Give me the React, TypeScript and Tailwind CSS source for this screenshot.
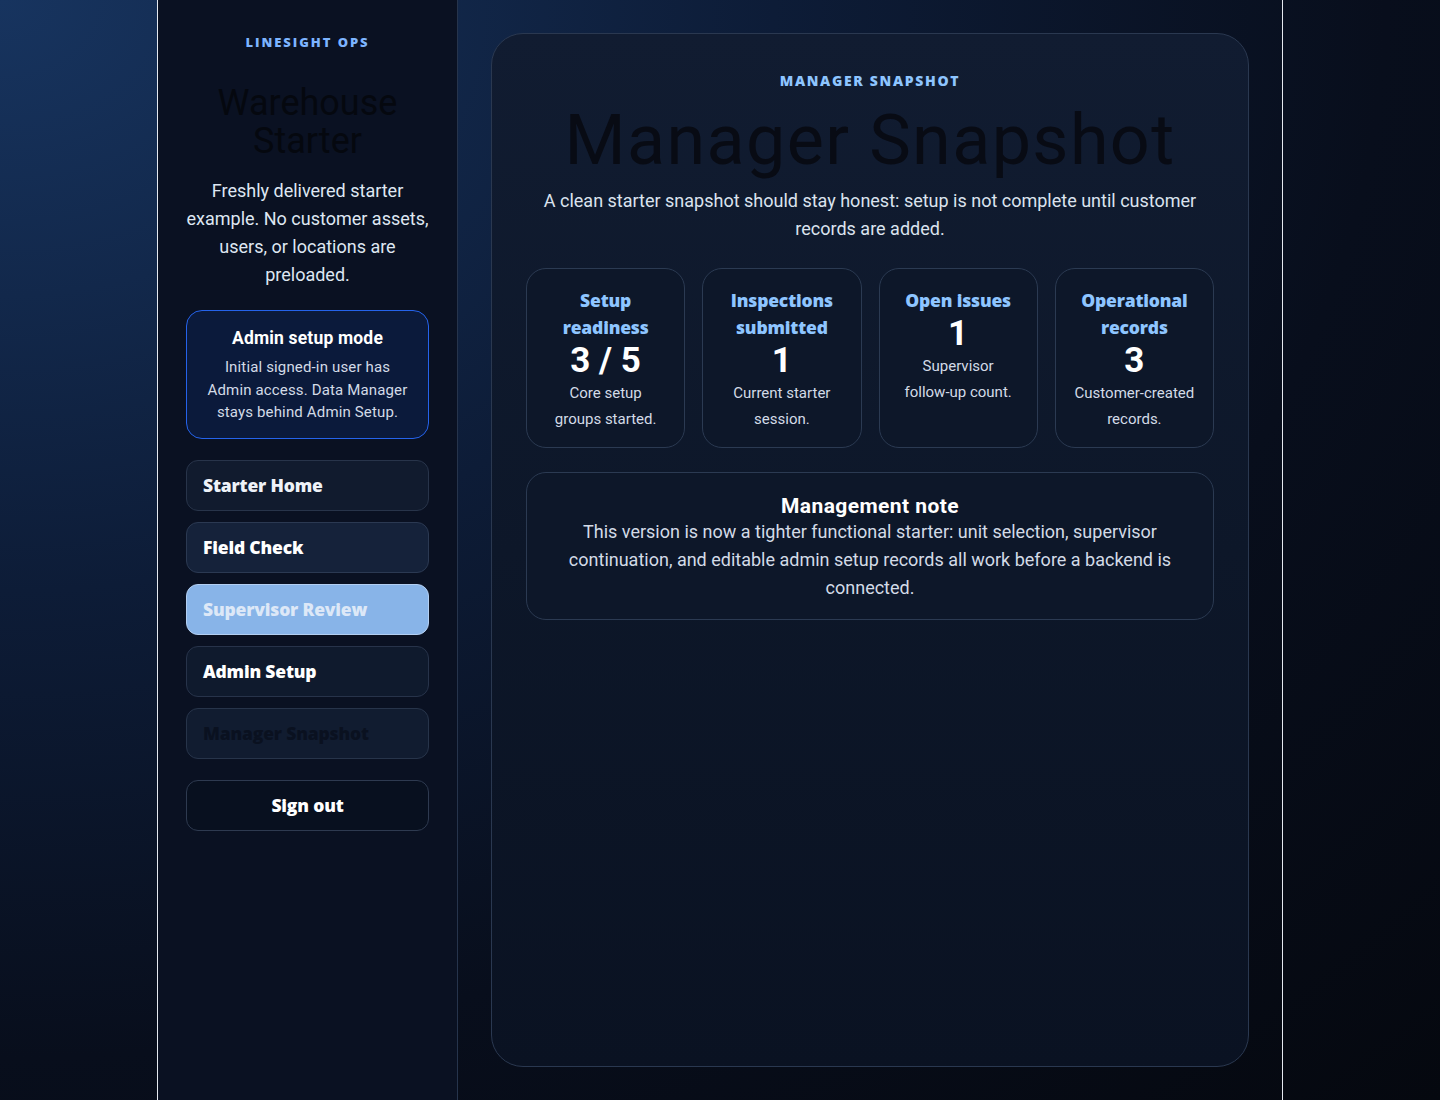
import React from "react";

const heavy = { fontFamily: "'Open Sans', 'Noto Sans', sans-serif" };

const navItems = [
  { label: "Starter Home", cls: "bg-[#111b2e] border-[#28344a] text-[#eef2f8]" },
  { label: "Field Check", cls: "bg-[#15223a] border-[#2b3952] text-white" },
  { label: "Supervisor Review", cls: "bg-[#88b4e8] border-[#b3cff2] text-[#dde8f7]" },
  { label: "Admin Setup", cls: "bg-[#0f1a2d] border-[#27334a] text-white" },
  { label: "Manager Snapshot", cls: "bg-[#111c30] border-[#27344a] text-[#0a1120]" },
];

const stats = [
  { title: ["Setup", "readiness"], value: "3 / 5", desc: ["Core setup", "groups started."] },
  { title: ["Inspections", "submitted"], value: "1", desc: ["Current starter", "session."] },
  { title: ["Open issues"], value: "1", desc: ["Supervisor", "follow-up count."] },
  { title: ["Operational", "records"], value: "3", desc: ["Customer-created", "records."] },
];

function Lines({ lines }: { lines: string[] }) {
  return (
    <>
      {lines.map((l, i) => (
        <span key={i} className="block">
          {l}
        </span>
      ))}
    </>
  );
}

/** Manager snapshot screen */
export default function App() {
  return (
    <div
      className="min-h-screen w-full bg-[radial-gradient(ellipse_at_top_left,#17345f_0%,#0d1c37_38%,#080e1c_68%,#05080f_100%)] text-[#0a0f1a]"
      style={{ fontFamily: "Roboto, 'Noto Sans', sans-serif" }}
    >
      <div className="mx-auto flex min-h-screen w-[1126px] border-x border-[#e5e9f0]">
        {/* sidebar */}
        <aside className="w-[300px] shrink-0 border-r border-[#26344c] bg-[#0a1122] px-[28px] pt-[33px] text-center">
          <p style={heavy} className="text-[13px] font-extrabold leading-[18px] tracking-[0.15em] text-[#7db4ff]">
            LINESIGHT OPS
          </p>
          <h2 className="mt-[33px] text-[36px] leading-[38px] text-[#05080f]">
            Warehouse
            <br />
            Starter
          </h2>
          <p className="mt-[17px] text-[18px] leading-[28px] text-[#dfe7f2]">
            Freshly delivered starter example. No customer assets, users, or locations are preloaded.
          </p>

          <div className="mt-[21px] rounded-[16px] border-[1.5px] border-[#2563eb] bg-[#0b1a3b] px-[12px] pb-[14px] pt-[15px]">
            <p className="text-[17.5px] font-bold leading-[24px] tracking-[0.01em] text-white">Admin setup mode</p>
            <p className="mt-[6px] text-[15px] leading-[22.5px] tracking-[0.01em] text-[#d3dbe7]">
              <Lines lines={["Initial signed-in user has", "Admin access. Data Manager", "stays behind Admin Setup."]} />
            </p>
          </div>

          <nav className="mt-[21px] flex flex-col gap-[11px]">
            {navItems.map((item) => (
              <button
                key={item.label}
                style={heavy}
                className={`h-[51px] rounded-[12px] border px-[16px] text-left text-[17.5px] font-extrabold tracking-[-0.01em] ${item.cls}`}
              >
                {item.label}
              </button>
            ))}
          </nav>

          <button
            style={heavy}
            className="mt-[21px] h-[51px] w-full rounded-[12px] border border-[#2e3a50] bg-[#08101f] text-[17.5px] font-extrabold tracking-[-0.01em] text-white"
          >
            Sign out
          </button>
        </aside>

        {/* main */}
        <main className="flex flex-1 flex-col p-[33px]">
          <section className="flex-1 rounded-[32px] border border-[#2a3850] bg-[linear-gradient(180deg,#111c31_0%,#0d1729_50%,#0a1222_100%)] px-[34px] pt-[34px] text-center">
            <p style={heavy} className="text-[14px] font-extrabold leading-[26px] tracking-[0.12em] text-[#8ec5ff]">
              MANAGER SNAPSHOT
            </p>
            <h1 className="mt-[11px] text-[70px] leading-[70px] tracking-[0.02em] text-[#080b14]">Manager Snapshot</h1>
            <p className="mt-[12px] text-[18px] leading-[28px] text-[#dbe3ee]">
              <Lines
                lines={[
                  "A clean starter snapshot should stay honest: setup is not complete until customer",
                  "records are added.",
                ]}
              />
            </p>

            <div className="mt-[25px] grid grid-cols-4 gap-[17px]">
              {stats.map((s) => (
                <div
                  key={s.value + s.title[0]}
                  className="rounded-[20px] border border-[#2b3a52] bg-[#0d1729] px-[8px] pb-[15px] pt-[18px]"
                >
                  <p style={heavy} className="text-[17.5px] font-extrabold leading-[27px] tracking-[-0.01em] text-[#8ec5ff]">
                    <Lines lines={s.title} />
                  </p>
                  <p className="mt-[1px] text-[35px] font-bold leading-[38px] text-white">{s.value}</p>
                  <p className="text-[15px] leading-[26px] text-[#d3dbe7]">
                    <Lines lines={s.desc} />
                  </p>
                </div>
              ))}
            </div>

            <div className="mt-[24px] rounded-[20px] border border-[#2b3a52] bg-[#0d1729] px-[20px] pb-[17px] pt-[21px]">
              <p className="text-[21px] font-bold leading-[24px] tracking-[0.02em] text-white">Management note</p>
              <p className="text-[18px] leading-[28px] text-[#d3dbe7]">
                <Lines
                  lines={[
                    "This version is now a tighter functional starter: unit selection, supervisor",
                    "continuation, and editable admin setup records all work before a backend is",
                    "connected.",
                  ]}
                />
              </p>
            </div>
          </section>
        </main>
      </div>
    </div>
  );
}
